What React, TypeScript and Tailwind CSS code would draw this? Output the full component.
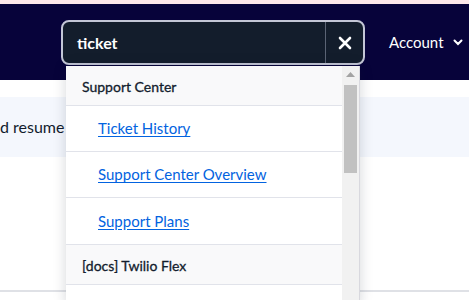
import React from "react";

export default function App() {
  const font = { fontFamily: 'Lato, "Noto Sans", sans-serif' };
  return (
    <div className="relative w-[469px] h-[300px] overflow-hidden bg-white" style={font}>
      <div className="h-[4px] bg-[#fde8ea]" />
      <header className="h-[76px] bg-[#07033a] flex items-center">
        <div className="ml-[61px] mt-[1px] w-[304px] h-[45px] rounded-[8px] border-2 border-[#c3c6d6] bg-[#131d2c] flex items-center">
          <span className="flex-1 pl-[14px] text-white text-[16px] font-bold leading-none">ticket</span>
          <div className="w-[38px] h-full border-l border-[#5b6475] flex items-center justify-center">
            <svg width="14" height="14" viewBox="0 0 14 14">
              <path d="M2 2L12 12M12 2L2 12" stroke="white" strokeWidth="2.6" strokeLinecap="round" />
            </svg>
          </div>
        </div>
        <div className="ml-[24px] flex items-center text-white text-[15px]">
          <span>Account</span>
          <svg className="ml-[9px]" width="10" height="7" viewBox="0 0 10 7">
            <path d="M1.5 1.5L5 5L8.5 1.5" stroke="white" strokeWidth="2" fill="none" strokeLinecap="round" />
          </svg>
        </div>
      </header>
      <div className="h-[17px]" />
      <div className="h-[60px] bg-[#f4f7fd] flex items-center">
        <span className="text-[16px] text-[#121c2d] whitespace-nowrap">d resume <span className="text-[#f0a070]">r</span></span>
      </div>
      <div className="absolute left-0 right-0 top-[290px] h-[2px] bg-[#dfe1e6]" />

      <div className="absolute left-[66px] top-[66px] w-[294px] h-[240px] bg-white border-r border-[#d8d8de] shadow-[0_0_12px_rgba(18,28,45,0.18)] flex">
        <div className="w-[277px] flex flex-col">
          <div className="h-[40px] shrink-0 bg-[#f9f9fa] border-b border-[#e1e3ea] flex items-center pl-[16px] pt-[2px] text-[14px] text-[#121c2d] [-webkit-text-stroke:0.3px_#121c2d]">Support Center</div>
          <div className="h-[46px] shrink-0 border-b border-[#e1e3ea] flex items-center pl-[32px] text-[15px] text-[#0263e0] underline underline-offset-2">Ticket History</div>
          <div className="h-[46px] shrink-0 border-b border-[#e1e3ea] flex items-center pl-[32px] text-[15px] text-[#0263e0] underline underline-offset-2">Support Center Overview</div>
          <div className="h-[47px] shrink-0 border-b border-[#e1e3ea] flex items-center pl-[32px] text-[15px] text-[#0263e0] underline underline-offset-2">Support Plans</div>
          <div className="h-[40px] shrink-0 bg-[#f9f9fa] border-b border-[#e1e3ea] flex items-center pl-[16px] pt-[2px] text-[14px] text-[#121c2d] [-webkit-text-stroke:0.3px_#121c2d]">[docs] Twilio Flex</div>
          <div className="flex-1 bg-white" />
        </div>
        <div className="w-[17px] bg-[#f1f1f1] flex flex-col items-center">
          <svg className="mt-[6px]" width="9" height="5" viewBox="0 0 9 5">
            <path d="M0 5L4.5 0L9 5Z" fill="#a3a3a3" />
          </svg>
          <div className="mt-[8px] w-[13px] h-[88px] bg-[#c1c1c1]" />
        </div>
      </div>
    </div>
  );
}
